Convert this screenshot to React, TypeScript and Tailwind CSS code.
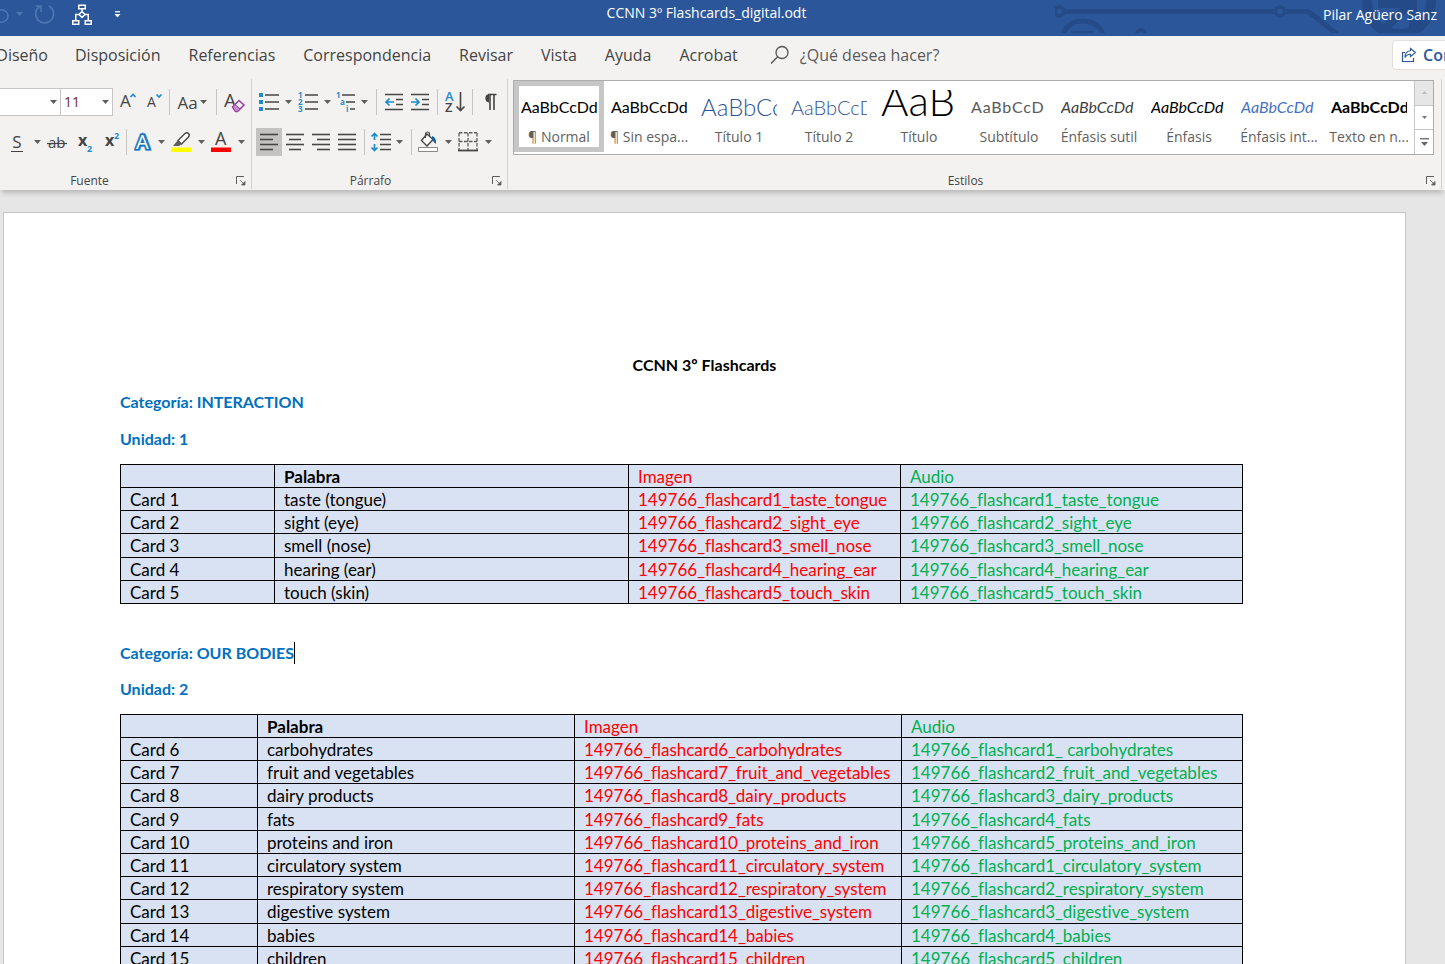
import type { ReactNode } from "react";

const UI = "font-['Open_Sans','Noto_Sans',sans-serif]";
const DOC = "font-['Lato','Open_Sans',sans-serif]";

type Row = [string, string, string, string];

const interaction: Row[] = [
  ["Card 1", "taste (tongue)", "149766_flashcard1_taste_tongue", "149766_flashcard1_taste_tongue"],
  ["Card 2", "sight (eye)", "149766_flashcard2_sight_eye", "149766_flashcard2_sight_eye"],
  ["Card 3", "smell (nose)", "149766_flashcard3_smell_nose", "149766_flashcard3_smell_nose"],
  ["Card 4", "hearing (ear)", "149766_flashcard4_hearing_ear", "149766_flashcard4_hearing_ear"],
  ["Card 5", "touch (skin)", "149766_flashcard5_touch_skin", "149766_flashcard5_touch_skin"],
];

const bodies: Row[] = [
  ["Card 6", "carbohydrates", "149766_flashcard6_carbohydrates", "149766_flashcard1_ carbohydrates"],
  ["Card 7", "fruit and vegetables", "149766_flashcard7_fruit_and_vegetables", "149766_flashcard2_fruit_and_vegetables"],
  ["Card 8", "dairy products", "149766_flashcard8_dairy_products", "149766_flashcard3_dairy_products"],
  ["Card 9", "fats", "149766_flashcard9_fats", "149766_flashcard4_fats"],
  ["Card 10", "proteins and iron", "149766_flashcard10_proteins_and_iron", "149766_flashcard5_proteins_and_iron"],
  ["Card 11", "circulatory system", "149766_flashcard11_circulatory_system", "149766_flashcard1_circulatory_system"],
  ["Card 12", "respiratory system", "149766_flashcard12_respiratory_system", "149766_flashcard2_respiratory_system"],
  ["Card 13", "digestive system", "149766_flashcard13_digestive_system", "149766_flashcard3_digestive_system"],
  ["Card 14", "babies", "149766_flashcard14_babies", "149766_flashcard4_babies"],
  ["Card 15", "children", "149766_flashcard15_children", "149766_flashcard5_children"],
];

function Caret({ className = "text-[#605e5c]" }: { className?: string }) {
  return (
    <svg width="7" height="4" viewBox="0 0 7 4" className={`shrink-0 ${className}`} aria-hidden="true">
      <path d="M0 0h7L3.5 4z" fill="currentColor" />
    </svg>
  );
}

function Tool({ label, className, children }: { label: string; className: string; children: ReactNode }) {
  return (
    <button type="button" aria-label={label} className={`flex h-7 shrink-0 items-center justify-center ${className}`}>
      {children}
    </button>
  );
}

function Sep() {
  return <span className="h-[26px] w-px shrink-0 bg-[#c8c6c4]" />;
}

function Icon({ children, w = 20, h = 22 }: { children: ReactNode; w?: number; h?: number }) {
  return (
    <svg width={w} height={h} viewBox={`0 0 ${w} ${h}`} className="shrink-0 overflow-visible" fill="none" aria-hidden="true">
      {children}
    </svg>
  );
}

const GLYPH = "font-['Open_Sans',sans-serif]";

function Lines({ rows }: { rows: [number, number][] }) {
  return (
    <Icon w={18} h={18}>
      {rows.map(([a, b], i) => (
        <path key={i} d={`M${a} ${1.5 + i * 5}H${b}`} stroke="#484644" strokeWidth="1.6" />
      ))}
    </Icon>
  );
}

function Launcher({ label }: { label: string }) {
  return (
    <button type="button" aria-label={label} className="flex h-4 w-4 items-center justify-center">
      <Icon w={10} h={10}>
        <path d="M.5 8V.5H8" stroke="#605e5c" />
        <path d="M4 4l4 4M9 5.500v3.500H5.500z" stroke="#605e5c" fill="#605e5c" strokeWidth=".8" />
      </Icon>
    </button>
  );
}

function Group({ name, className, labelClass = "", children }: { name: string; className: string; labelClass?: string; children: ReactNode }) {
  return (
    <section aria-label={name} className={`flex flex-col border-r border-[#d2d0ce] ${className}`}>
      <div className="flex-1">{children}</div>
      <div className="flex h-4 items-center pr-0.5">
        <span className={`flex-1 text-center text-xs text-[#444] ${labelClass}`}>{name}</span>
        <Launcher label={`Opciones de ${name}`} />
      </div>
    </section>
  );
}

const styles: { name: string; sample: string; look: string }[] = [
  { name: "¶ Normal", sample: "AaBbCcDd", look: "text-base/[34px] text-black" },
  { name: "¶ Sin espa...", sample: "AaBbCcDd", look: "text-base/[34px] text-black" },
  { name: "Título 1", sample: "AaBbCc", look: "text-2xl/[34px] font-light text-[#2f5496]" },
  { name: "Título 2", sample: "AaBbCcD", look: "text-xl/[34px] font-light text-[#2f5496]" },
  { name: "Título", sample: "AaB", look: "text-[42px]/5 font-light text-black" },
  { name: "Subtítulo", sample: "AaBbCcD", look: "text-base/[34px] tracking-wider text-[#5a5a5a]" },
  { name: "Énfasis sutil", sample: "AaBbCcDd", look: "text-base/[34px] italic text-[#404040]" },
  { name: "Énfasis", sample: "AaBbCcDd", look: "text-base/[34px] italic text-black" },
  { name: "Énfasis int...", sample: "AaBbCcDd", look: "text-base/[34px] italic text-[#4472c4]" },
  { name: "Texto en n...", sample: "AaBbCcDd", look: "text-base/[34px] font-bold text-black" },
];

function TitleBar() {
  return (
    <header className="relative flex h-9 shrink-0 items-center justify-between overflow-hidden bg-[#2b579a] text-sm text-white">
      <svg width="390" height="33" viewBox="0 0 390 33" className="absolute top-0 right-0" fill="none" stroke="#244b87" aria-hidden="true">
        <path d="M9 11.500H220M230 11.500H250Q254 11.500 258 15L282 34" strokeWidth="5" />
        <circle cx="4.500" cy="11.500" r="4.500" strokeWidth="3.500" />
        <circle cx="225" cy="11.500" r="4.500" strokeWidth="3.500" />
        <path d="M8 37a20 16 0 0 1 40 0" strokeWidth="5" />
        <path d="M16 33h23" strokeWidth="4" />
        <circle cx="86" cy="34" r="4" strokeWidth="4" />
        <circle cx="344" cy="2" r="32" strokeWidth="10" />
        <path d="M328 30L354 5M323 4h35v26" strokeWidth="8" />
      </svg>
      <div className="relative flex flex-1 items-center pb-2">
        <Tool label="Deshacer" className="w-[9px]">
          <Icon w={9} h={20}>
            <path d="M0 6h2a6 6 0 0 1 0 12H0" stroke="#4f76b3" strokeWidth="1.600" />
          </Icon>
        </Tool>
        <Tool label="Lista de deshacer" className="w-5">
          <Caret className="text-[#4f76b3]" />
        </Tool>
        <Tool label="Repetir" className="w-8">
          <Icon w={22} h={22}>
            <path d="M5.500 3.500A9 9 0 1 0 15 3M1.500 3H7v6" stroke="#4f76b3" strokeWidth="1.600" />
          </Icon>
        </Tool>
        <Tool label="Organigrama" className="w-[42px]">
          <Icon w={20} h={21}>
            <g stroke="#fff" strokeWidth="1.500">
              <path d="M6.750 1.250h6.500v3.500h-6.500zM.75 16.750h6v3.500h-6zM13.250 16.750h6v3.500h-6zM10 5v2.500M7 10.500H3.750v6M13 10.500h3.250v6M10 7.500l3 3-3 3-3-3z" />
            </g>
          </Icon>
        </Tool>
        <Tool label="Personalizar barra" className="w-7">
          <Icon w={7} h={7}>
            <path d="M1 .75h5" stroke="#fff" strokeWidth="1.300" />
            <path d="M.5 3h6L3.500 6.500z" fill="#fff" />
          </Icon>
        </Tool>
      </div>
      <h1 className="relative mr-6 pb-2.5">CCNN 3º Flashcards_digital.odt</h1>
      <p className="relative flex-1 pr-2 pb-1.5 text-right">Pilar Agüero Sanz</p>
    </header>
  );
}

function Tabs() {
  const tabs = ["Disposición", "Referencias", "Correspondencia", "Revisar", "Vista", "Ayuda", "Acrobat"];
  return (
    <nav className="flex h-[39px] shrink-0 items-center bg-[#f3f2f1] pb-0.5 text-base text-[#444]">
      <div className="flex w-12 justify-end">
        <a href="#diseno" className="whitespace-nowrap">Diseño</a>
      </div>
      <div className="ml-[27px] flex gap-7">
        {tabs.map((t) => (
          <a key={t} href={`#${t}`}>{t}</a>
        ))}
      </div>
      <label className="ml-8 flex items-center gap-2.5">
        <Icon w={20} h={20}>
          <circle cx="12" cy="7.500" r="6" stroke="#555" strokeWidth="1.300" />
          <path d="M7.700 11.700L1 18.500" stroke="#555" strokeWidth="1.400" />
        </Icon>
        <input aria-label="¿Qué desea hacer?" placeholder="¿Qué desea hacer?" className="w-44 bg-transparent outline-none placeholder:text-[#5a5a5a]" />
      </label>
      <div className="ml-auto w-[53px] overflow-hidden">
        <button type="button" className="flex h-[30px] w-32 items-center gap-1.5 rounded border border-[#e1dfdd] bg-white pl-2 font-semibold text-[#2b579a]">
          <Icon w={16} h={16}>
            <path d="M4 5.500H1.500v9h11V11" stroke="#2b579a" strokeWidth="1.200" />
            <path d="M9.500 1.500l5 4-5 4V7.200C7 7.200 5 8.500 4 10.500c0-4 2-6.400 5.500-6.700z" stroke="#2b579a" strokeWidth="1.100" />
          </Icon>
          Compartir
        </button>
      </div>
    </nav>
  );
}

function FontGroup() {
  return (
    <Group name="Fuente" className="w-[252px]" labelClass="-ml-[54px]">
      <div className="mt-[3px] flex h-10 items-center">
        <div className="relative">
          <select aria-label="Fuente" className="block h-7 w-[61px] appearance-none border border-l-0 border-[#c8c6c4] bg-white" />
          <span className="pointer-events-none absolute top-3 right-1"><Caret /></span>
        </div>
        <div className="relative">
          <select aria-label="Tamaño de fuente" className="block h-7 w-[52px] appearance-none border border-l-0 border-[#c8c6c4] bg-white pl-[3px] text-sm text-[#6b2c2c]">
            <option>11</option>
          </select>
          <span className="pointer-events-none absolute top-3 right-1"><Caret /></span>
        </div>
        <Tool label="Aumentar tamaño" className="ml-0.5 w-[26px]">
          <Icon w={18} h={22}>
            <text x="1" y="16" fontSize="17" fill="#444" className={GLYPH}>A</text>
            <path d="M11.500 6l2.500-2.500 2.500 2.500" stroke="#1e8bcd" strokeWidth="1.700" />
          </Icon>
        </Tool>
        <Tool label="Reducir tamaño" className="w-[26px]">
          <Icon w={17} h={22}>
            <text x="1" y="16" fontSize="14" fill="#444" className={GLYPH}>A</text>
            <path d="M10.500 3.500L13 6l2.500-2.500" stroke="#1e8bcd" strokeWidth="1.700" />
          </Icon>
        </Tool>
        <span className="w-0.5" />
        <Sep />
        <Tool label="Cambiar mayúsculas" className="w-[44px] gap-0.5">
          <span className="text-[17px] leading-none text-[#444]">Aa</span>
          <Caret />
        </Tool>
        <span className="w-0.5" />
        <Sep />
        <Tool label="Borrar formato" className="w-[34px]">
          <Icon w={21} h={22}>
            <text x="0" y="16" fontSize="19" fill="#444" className={GLYPH}>A</text>
            <path d="M8.500 16L15 9.500l5 4.500-6.500 6.500h-2z" fill="#f3f2f1" stroke="#9b3ba8" strokeWidth="1.500" />
            <path d="M8.500 16l2.500-2.500 5 4.500-2.500 2.500h-2z" fill="#c58ccd" stroke="#9b3ba8" />
          </Icon>
        </Tool>
      </div>
      <div className="flex h-10 items-center pl-[7px]">
        <Tool label="Subrayado" className="w-5">
          <span className="border-b border-[#444] px-px text-[17px] leading-[18px] text-[#444]">S</span>
        </Tool>
        <Tool label="Tipos de subrayado" className="w-5"><Caret /></Tool>
        <Tool label="Tachado" className="w-5">
          <Icon w={20} h={20}>
            <text x="1" y="16" fontSize="15" fill="#444" className={GLYPH}>ab</text>
            <path d="M0 11.500h20" stroke="#444" strokeWidth="1.200" />
          </Icon>
        </Tool>
        <Tool label="Subíndice" className="w-9">
          <Icon w={14} h={22}>
            <text x="0" y="15" fontSize="16" fontWeight="700" fill="#444" className={GLYPH}>x</text>
            <text x="9" y="21" fontSize="9" fontWeight="700" fill="#1e8bcd" className={GLYPH}>2</text>
          </Icon>
        </Tool>
        <Tool label="Superíndice" className="w-[18px]">
          <Icon w={15} h={22}>
            <text x="0" y="15" fontSize="16" fontWeight="700" fill="#444" className={GLYPH}>x</text>
            <text x="9" y="8" fontSize="9" fontWeight="700" fill="#1e8bcd" className={GLYPH}>2</text>
          </Icon>
        </Tool>
        <span className="w-[5px]" />
        <Sep />
        <span className="w-0.5" />
        <Tool label="Efectos de texto" className="w-7">
          <Icon w={20} h={22}>
            <text x="3" y="18" fontSize="20" fontWeight="600" fill="#fff" stroke="#9cc9ec" strokeWidth="4" strokeLinejoin="round" className={GLYPH}>A</text>
            <text x="3" y="18" fontSize="20" fontWeight="600" fill="#fff" stroke="#1b75bc" strokeWidth="3" className={GLYPH}>A</text>
            <text x="3" y="18" fontSize="20" fontWeight="400" fill="#fff" className={GLYPH}>A</text>
          </Icon>
        </Tool>
        <Tool label="Opciones de efectos" className="w-2"><Caret /></Tool>
        <Tool label="Resaltado" className="w-8">
          <Icon w={20} h={22}>
            <path d="M0 16.500h20v4.500H0z" fill="#ff0" />
            <path d="M7 9.500L14 2.500q2-1.500 3.500 0t0 3.500L10.500 13z" stroke="#484644" strokeWidth="1.400" fill="#fff" />
            <path d="M7 9l4 4-3 2H2z" fill="#605e5c" />
          </Icon>
        </Tool>
        <Tool label="Colores de resaltado" className="w-2"><Caret /></Tool>
        <Tool label="Color de fuente" className="w-8">
          <Icon w={20} h={22}>
            <path d="M0 16.500h20v4.500H0z" fill="red" />
            <text x="4" y="14" fontSize="18" fill="#444" className={GLYPH}>A</text>
          </Icon>
        </Tool>
        <Tool label="Colores de fuente" className="w-2"><Caret /></Tool>
      </div>
    </Group>
  );
}

function ParagraphGroup() {
  return (
    <Group name="Párrafo" className="w-64">
      <div className="mt-[3px] flex h-10 items-center pl-[3px]">
        <Tool label="Viñetas" className="w-7">
          <Icon w={20} h={20}>
            <path d="M0 1h4v4H0zM0 8h4v4H0zM0 15h4v4H0z" fill="#1e8bcd" />
            <path d="M6 3h14M6 10h14M6 17h14" stroke="#484644" strokeWidth="1.500" />
          </Icon>
        </Tool>
        <Tool label="Tipos de viñetas" className="w-2.5"><Caret /></Tool>
        <Tool label="Numeración" className="w-[29px]">
          <Icon w={20} h={22}>
            <g fontSize="8" fontWeight="700" fill="#1e8bcd" className={GLYPH}>
              <text x="0" y="7">1</text>
              <text x="0" y="14">2</text>
              <text x="0" y="21">3</text>
            </g>
            <path d="M7 4h13M7 11h13M7 18h13" stroke="#484644" strokeWidth="1.500" />
          </Icon>
        </Tool>
        <Tool label="Tipos de numeración" className="w-2.5"><Caret /></Tool>
        <Tool label="Lista multinivel" className="w-7">
          <Icon w={20} h={22}>
            <g fontSize="8" fontWeight="700" fill="#1e8bcd" className={GLYPH}>
              <text x="0" y="7">1</text>
              <text x="4" y="14">a</text>
              <text x="10" y="21">i</text>
            </g>
            <path d="M6 4h13M10 11h9M14 18h5" stroke="#484644" strokeWidth="1.500" />
          </Icon>
        </Tool>
        <Tool label="Tipos de lista" className="w-2"><Caret /></Tool>
        <span className="w-2" />
        <Sep />
        <span className="w-1" />
        <Tool label="Reducir sangría" className="w-[26px]">
          <Icon w={18} h={18}>
            <path d="M0 1.500h18M11 6.500h7M11 11.500h7M0 16.500h18" stroke="#484644" strokeWidth="1.500" />
            <path d="M9 9H1.500M4.500 5.500L1 9l3.500 3.500" stroke="#1e8bcd" strokeWidth="1.700" />
          </Icon>
        </Tool>
        <Tool label="Aumentar sangría" className="w-[26px]">
          <Icon w={18} h={18}>
            <path d="M0 1.500h18M11 6.500h7M11 11.500h7M0 16.500h18" stroke="#484644" strokeWidth="1.500" />
            <path d="M0 9h7.500M4.500 5.500L8 9l-3.500 3.500" stroke="#1e8bcd" strokeWidth="1.700" />
          </Icon>
        </Tool>
        <span className="w-1" />
        <Sep />
        <Tool label="Ordenar" className="w-[34px]">
          <Icon w={21} h={22}>
            <g fontSize="13" fontWeight="600" className={GLYPH}>
              <text x="0" y="10" fill="#1e8bcd">A</text>
              <text x="0" y="21" fill="#444">Z</text>
            </g>
            <path d="M15.500 1v18M11.500 15.500l4 4 4-4" stroke="#444" strokeWidth="1.600" />
          </Icon>
        </Tool>
        <Sep />
        <Tool label="Mostrar marcas de párrafo" className="w-[34px]">
          <Icon w={14} h={18}>
            <path d="M6 9.500A4.300 4.300 0 0 1 6 1z" fill="#444" />
            <path d="M5 1.500h8.500M7 1v16M11 1v16" stroke="#444" strokeWidth="1.600" />
          </Icon>
        </Tool>
      </div>
      <div className="flex h-10 items-center pl-1">
        <Tool label="Alinear a la izquierda" className="w-[26px] bg-[#c5c3c1]">
          <Lines rows={[[0, 18], [0, 13], [0, 18], [0, 13]]} />
        </Tool>
        <Tool label="Centrar" className="w-[26px]">
          <Lines rows={[[0, 18], [3, 15], [0, 18], [3, 15]]} />
        </Tool>
        <Tool label="Alinear a la derecha" className="w-[26px]">
          <Lines rows={[[0, 18], [5, 18], [0, 18], [5, 18]]} />
        </Tool>
        <Tool label="Justificar" className="w-[26px]">
          <Lines rows={[[0, 18], [0, 18], [0, 18], [0, 18]]} />
        </Tool>
        <span className="w-1" />
        <Sep />
        <Tool label="Interlineado" className="w-[31px]">
          <Icon w={20} h={20}>
            <path d="M3.500 1v7M.5 4.500l3-3 3 3M3.500 12v7M.5 15.500l3 3 3-3" stroke="#1e8bcd" strokeWidth="1.700" />
            <path d="M9 2.500h11M9 7.500h11M9 12.500h11M9 17.500h11" stroke="#484644" strokeWidth="1.600" />
          </Icon>
        </Tool>
        <Caret />
        <span className="w-2" />
        <Sep />
        <Tool label="Sombreado" className="w-8">
          <Icon w={20} h={22}>
            <path d="M.5 16.500h19v4H.5z" fill="#fff" stroke="#8a8886" />
            <path d="M9 3L3.500 9.500 9 15l6-6.500z" fill="#fff" stroke="#484644" strokeWidth="1.400" />
            <path d="M7.500 7V3a2 2 0 0 1 4 0v3" stroke="#484644" strokeWidth="1.200" />
            <path d="M14 5q4.500 1 4 8-2.500-1-4-5z" fill="#1464a5" />
          </Icon>
        </Tool>
        <Tool label="Colores de sombreado" className="w-2"><Caret /></Tool>
        <Tool label="Bordes" className="w-8">
          <Icon w={20} h={20}>
            <path d="M1 .75h18M1 9.500h18M1 1v17M10 1v17M19 1v17" stroke="#605e5c" strokeWidth="1.300" strokeDasharray="3.500 1.500" />
            <path d="M0 18.500h20" stroke="#484644" strokeWidth="1.800" />
          </Icon>
        </Tool>
        <Tool label="Tipos de bordes" className="w-2"><Caret /></Tool>
      </div>
    </Group>
  );
}

function StylesGroup() {
  return (
    <Group name="Estilos" className="mr-[3px] min-w-0 flex-1">
      <div className="mt-px mr-[7px] ml-[5px] flex h-[75px] border border-[#acacac] bg-white">
        <div className="flex min-w-0 flex-1 overflow-hidden">
          {styles.map((s, i) => (
            <button
              key={s.name}
              type="button"
              aria-pressed={i === 0}
              className={`flex h-[71px] w-[90px] shrink-0 flex-col items-center border-[5px] pt-1 ${i === 0 ? "border-[#c6c6c6]" : "border-transparent"}`}
            >
              <span className={`flex h-[38px] w-[76px] items-start overflow-hidden whitespace-nowrap ${DOC} ${s.look}`}>{s.sample}</span>
              <span className="text-sm leading-5 whitespace-nowrap text-[#5f5f5f]">{s.name}</span>
            </button>
          ))}
        </div>
        <div className="flex w-[19px] flex-col border-l border-[#c6c6c6]">
          <button type="button" aria-label="Fila anterior" className="flex flex-1 items-center justify-center bg-[#e6e6e6]">
            <Icon w={5} h={3}><path d="M0 3h5L2.500 0z" fill="#bbb" /></Icon>
          </button>
          <button type="button" aria-label="Fila siguiente" className="flex flex-1 items-center justify-center border-y border-[#c6c6c6]">
            <Icon w={5} h={3}><path d="M0 0h5L2.500 3z" fill="#777" /></Icon>
          </button>
          <button type="button" aria-label="Más estilos" className="flex flex-1 items-center justify-center">
            <Icon w={9} h={8}>
              <path d="M0 .75h9" stroke="#666" strokeWidth="1.300" />
              <path d="M1 4h7L4.500 8z" fill="#666" />
            </Icon>
          </button>
        </div>
      </div>
    </Group>
  );
}

function CardTable({ label, rows, cols, height }: { label: string; rows: Row[]; cols: string[]; height: string }) {
  const cell = "border border-black px-[9px] pt-px pb-0 text-left leading-[21px] whitespace-nowrap";
  return (
    <table aria-label={label} className={`w-full table-fixed border-collapse bg-[#d9e2f3] text-[17px] [font-variant-ligatures:none] ${height}`}>
      <colgroup>
        {cols.map((c, i) => (
          <col key={i} className={c} />
        ))}
      </colgroup>
      <thead>
        <tr>
          <td className={cell} />
          <th className={`${cell} font-bold`}>Palabra</th>
          <th className={`${cell} font-normal text-[#ff0000]`}>Imagen</th>
          <th className={`${cell} font-normal text-[#00b050]`}>Audio</th>
        </tr>
      </thead>
      <tbody>
        {rows.map((r) => (
          <tr key={r[0]}>
            <td className={cell}>{r[0]}</td>
            <td className={cell}>{r[1]}</td>
            <td className={`${cell} text-[#ff0000]`}>{r[2]}</td>
            <td className={`${cell} text-[#00b050]`}>{r[3]}</td>
          </tr>
        ))}
      </tbody>
    </table>
  );
}

export default function App() {
  return (
    <div className={`flex h-screen flex-col overflow-hidden bg-[#e6e6e6] ${UI}`}>
      <TitleBar />
      <Tabs />
      <div className="z-10 flex h-[115px] shrink-0 bg-[#f3f2f1] pt-1 pb-px shadow-[0_5px_5px_-2px_rgba(0,0,0,0.2)]">
        <FontGroup />
        <ParagraphGroup />
        <StylesGroup />
      </div>
      <main className="flex min-h-0 flex-1 overflow-hidden pt-[22px] pr-[39px] pl-[3px]">
        <article className={`h-max min-h-full flex-1 border border-[#c6c6c6] bg-white px-[116px] pt-[140px] text-base text-black ${DOC}`}>
          <h2 className="text-center leading-6 font-bold">CCNN 3º Flashcards</h2>
          <h3 className="mt-[13px] leading-6 font-bold text-[#0070c0]">Categoría: INTERACTION</h3>
          <h3 className="mt-[13px] leading-6 font-bold text-[#0070c0]">Unidad: 1</h3>
          <div className="mt-[13px] mr-[46px]">
            <CardTable label="INTERACTION" rows={interaction} cols={["w-[154px]", "w-[354px]", "w-[272px]", ""]} height="h-[140px]" />
          </div>
          <h3 className="mt-[37px] flex items-center leading-6 font-bold text-[#0070c0]">
            Categoría: OUR BODIES
            <span className="h-[22px] w-px bg-black" />
          </h3>
          <h3 className="mt-3 leading-6 font-bold text-[#0070c0]">Unidad: 2</h3>
          <div className="mt-[13px] mr-[46px]">
            <CardTable label="OUR BODIES" rows={bodies} cols={["w-[137px]", "w-[317px]", "w-[327px]", ""]} height="h-[256px]" />
          </div>
        </article>
      </main>
    </div>
  );
}
